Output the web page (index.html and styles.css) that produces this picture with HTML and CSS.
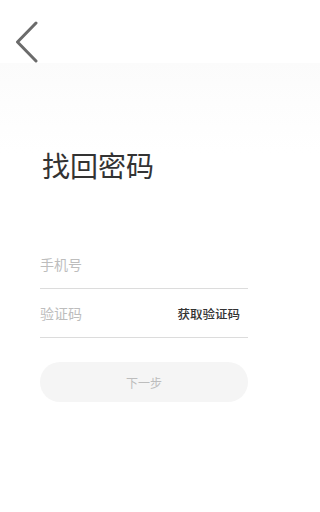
FILE: index.html
```html
<!DOCTYPE html>
<html lang="zh-CN">
<head>
<meta charset="utf-8">
<title>找回密码</title>
<link rel="stylesheet" href="styles.css">
</head>
<body>
<div class="page">
  <header class="topbar">
    <button class="back" aria-label="返回">
      <svg width="48" height="63" viewBox="0 0 48 63">
        <polyline points="36,23 17.5,42 36,61" fill="none" stroke="#6b6b6b" stroke-width="3" stroke-linecap="round" stroke-linejoin="round"/>
      </svg>
    </button>
  </header>
  <main class="content">
    <div class="inner">
      <h1 class="title">找回密码</h1>
      <div class="form">
        <div class="field"><span class="placeholder">手机号</span></div>
        <div class="field"><span class="placeholder">验证码</span><span class="code-btn">获取验证码</span></div>
        <div class="next">下一步</div>
      </div>
    </div>
  </main>
</div>
</body>
</html>
```

FILE: styles.css
```css
html, body {
  margin: 0;
  padding: 0;
  background: #fff;
}
body {
  font-family: "Noto Sans CJK SC", "Noto Sans", sans-serif;
  min-height: 512px;
}
.page {
  display: flex;
  flex-direction: column;
  min-height: 512px;
}
.topbar {
  height: 63px;
  background: #fff;
  display: flex;
  align-items: flex-start;
}
.back {
  border: 0;
  padding: 0;
  margin: 0;
  background: transparent;
  width: 48px;
  height: 63px;
  display: block;
}
.back svg { display: block; }
.content {
  flex: 1;
  background: linear-gradient(#fbfbfb 0px, #fdfdfd 40px, #ffffff 90px);
  padding: 0 40px;
}
.inner {
  width: 208px;
}
.title {
  margin: 88px 0 0 2px;
  font-size: 28px;
  line-height: 28px;
  font-weight: 400;
  color: #333;
}
.form {
  margin-top: 61px;
  display: flex;
  flex-direction: column;
}
.field {
  height: 48px;
  border-bottom: 1px solid #dcdcdc;
  display: flex;
  align-items: center;
  justify-content: space-between;
}
.placeholder {
  font-size: 14px;
  color: #bdbdbd;
  line-height: 14px;
}
.code-btn {
  font-size: 12.5px;
  line-height: 13px;
  color: #333;
  font-weight: 500;
  margin-right: 8px;
}
.next {
  margin-top: 24px;
  height: 40px;
  border-radius: 20px;
  background: #f5f5f5;
  color: #bdbdbd;
  font-size: 12px;
  display: flex;
  align-items: center;
  justify-content: center;
}
```
